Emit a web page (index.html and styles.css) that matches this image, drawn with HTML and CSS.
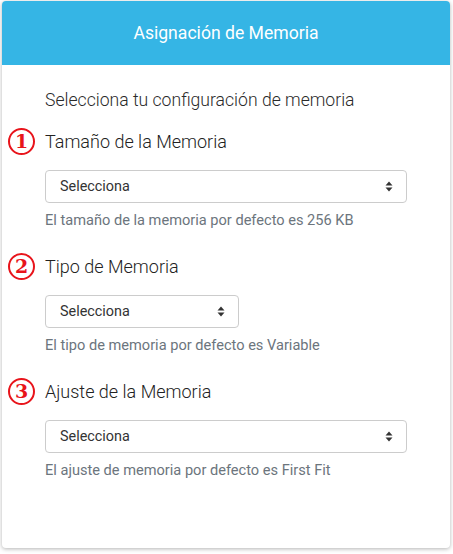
FILE: index.html
```html
<!DOCTYPE html>
<html lang="es">
<head>
<meta charset="utf-8">
<link rel="stylesheet" href="styles.css">
</head>
<body>
<div class="card">
  <div class="card-header">Asignación de Memoria</div>
  <div class="card-body">
    <p class="intro">Selecciona tu configuración de memoria</p>

    <div class="group">
      <h3 class="label"><span class="num">1</span>Tamaño de la Memoria</h3>
      <div class="select"><span>Selecciona</span><svg class="caret" width="8" height="11" viewBox="0 0 8 11"><path d="M4 0.5L7.5 4.5H0.5Z M4 10.5L7.5 6.5H0.5Z" fill="#333"/></svg></div>
      <p class="help">El tamaño de la memoria por defecto es 256 KB</p>
    </div>

    <div class="group">
      <h3 class="label"><span class="num">2</span>Tipo de Memoria</h3>
      <div class="select narrow"><span>Selecciona</span><svg class="caret" width="8" height="11" viewBox="0 0 8 11"><path d="M4 0.5L7.5 4.5H0.5Z M4 10.5L7.5 6.5H0.5Z" fill="#333"/></svg></div>
      <p class="help">El tipo de memoria por defecto es Variable</p>
    </div>

    <div class="group">
      <h3 class="label"><span class="num">3</span>Ajuste de la Memoria</h3>
      <div class="select"><span>Selecciona</span><svg class="caret" width="8" height="11" viewBox="0 0 8 11"><path d="M4 0.5L7.5 4.5H0.5Z M4 10.5L7.5 6.5H0.5Z" fill="#333"/></svg></div>
      <p class="help">El ajuste de memoria por defecto es First Fit</p>
    </div>
  </div>
</div>
</body>
</html>
```
FILE: styles.css
```css
* { box-sizing: border-box; }
html, body { margin: 0; padding: 0; background: #fff; }
body {
  font-family: Roboto, "Liberation Sans", sans-serif;
  color: #212529;
  padding: 1px 3px 6px 2px;
}
.card {
  width: 448px;
  height: 547px;
  background: #fff;
  border-radius: 4px;
  box-shadow: 0 1px 4px rgba(0,0,0,0.3);
  overflow: hidden;
}
.card-header {
  height: 64px;
  background: #35b5e5;
  color: #fff;
  font-size: 17.6px;
  display: flex;
  align-items: center;
  justify-content: center;
}
.card-body {
  padding: 0 43px;
}
.intro {
  margin: 23px 0 0 0;
  font-size: 17.6px;
  font-weight: 300;
  line-height: 24px;
  color: #2a2a2a;
}
.group + .group { margin-top: 23px; }
.intro + .group { margin-top: 16px; }
.label {
  margin: 0;
  font-weight: 300;
  font-size: 18px;
  line-height: 26px;
  display: flex;
  align-items: center;
  color: #222;
}
.num {
  width: 27px;
  height: 27px;
  margin-left: -37px;
  margin-right: 10px;
  border: 2px solid #e8141b;
  border-radius: 50%;
  color: #e8141b;
  font-family: "DejaVu Serif", "Liberation Serif", serif;
  font-weight: 700;
  font-size: 19px;
  line-height: 23px;
  text-align: center;
  flex: none;
}
.select {
  margin-top: 15px;
  height: 33px;
  width: 362px;
  border: 1px solid #ccc;
  border-radius: 4px;
  display: flex;
  align-items: center;
  justify-content: space-between;
  padding: 0 13px 0 14px;
  font-size: 14.4px;
  color: #333;
}
.select.narrow { width: 194px; }
.caret { flex: none; }
.help {
  margin: 7px 0 0 0;
  font-size: 14.6px;
  line-height: 20px;
  color: #6c757d;
}
```
